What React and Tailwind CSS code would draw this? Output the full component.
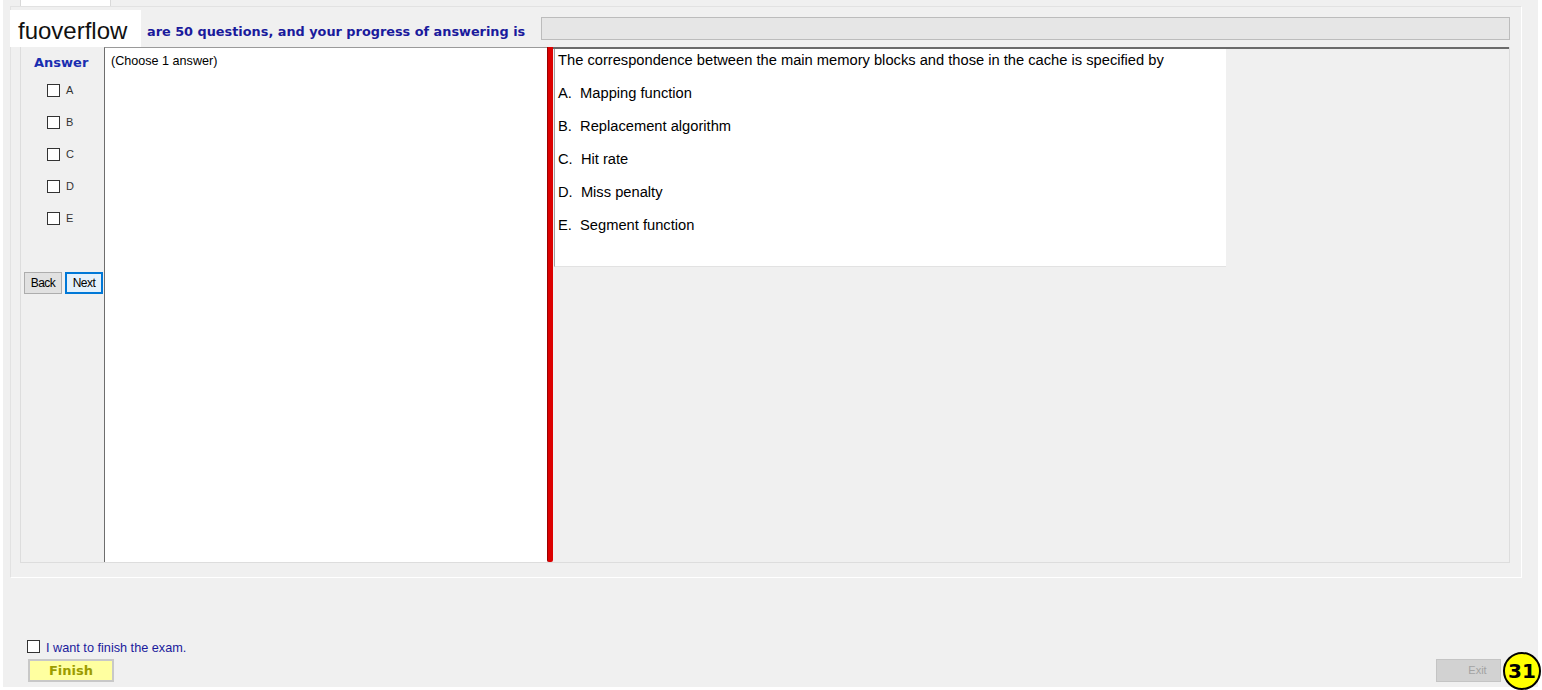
import React from "react";

const options = [
  "Mapping function",
  "Replacement algorithm",
  "Hit rate",
  "Miss penalty",
  "Segment function",
];
const letters = ["A", "B", "C", "D", "E"];

const dv = { fontFamily: '"DejaVu Sans", Verdana, sans-serif' };

function Box({ className = "" }) {
  return (
    <span
      className={
        "block w-[13px] h-[13px] bg-white border border-[#333333] " + className
      }
    />
  );
}

export default function App() {
  return (
    <div
      className="relative w-[1542px] h-[690px] bg-white overflow-hidden"
      style={{ fontFamily: '"Liberation Sans", Arial, sans-serif' }}
    >
      <div className="ml-[3px] w-[1535px] h-[687px] bg-[#f0f0f0] flex flex-col">
        {/* tab strip */}
        <div className="h-[6px] flex">
          <div className="ml-[17px] w-[91px] h-[6px] bg-white border-x border-[#d9d9d9]" />
        </div>

        {/* tab page */}
        <div className="ml-[7px] w-[1512px] h-[572px] border border-[#e2e2e2] border-r-white border-b-white flex flex-col">
          <div className="h-[40px] flex items-start">
            <div
              className="ml-[136px] mt-[17px] leading-[16px] text-[12.85px] font-bold text-[#1a1a9c] whitespace-nowrap"
              style={dv}
            >
              are 50 questions, and your progress of answering is
            </div>
            <div className="ml-auto mr-[11px] mt-[10px] w-[969px] h-[23px] bg-[#e6e6e6] border border-[#bcbcbc]" />
          </div>

          <div className="ml-[9px] w-[1490px] h-[516px] border-x border-b border-[#dddddd] flex">
            {/* answer column */}
            <div className="w-[83px] flex flex-col">
              <div
                className="pt-[8px] pl-[13px] text-[13px] leading-[16px] font-bold text-[#1a2eb0]"
                style={dv}
              >
                Answer
              </div>
              <div className="mt-[3px] flex flex-col">
                {letters.map((l) => (
                  <div key={l} className="h-[32px] flex items-center pl-[26px]">
                    <Box />
                    <span className="ml-[6px] text-[11px] leading-[13px] text-[#333333]">
                      {l}
                    </span>
                  </div>
                ))}
              </div>
              <div className="mt-[38px] pl-[3px] flex gap-[3px]">
                <button className="w-[38px] h-[22px] bg-[#e1e1e1] border border-[#adadad] text-[12px] text-black leading-[20px] tracking-[-0.5px]">
                  Back
                </button>
                <button className="w-[38px] h-[22px] bg-[#e5f1fb] border-2 border-[#0078d7] text-[12px] text-black leading-[18px] tracking-[-0.5px]">
                  Next
                </button>
              </div>
            </div>

            {/* textarea */}
            <div className="w-[443px] bg-white border-l border-t border-l-[#6d6d6d] border-t-[#9a9a9a] pl-[6px] pt-[6px] text-[12.6px] leading-[14px] text-black">
              (Choose 1 answer)
            </div>

            {/* splitter */}
            <div className="w-[6px] bg-[#dc0000] border-l border-[#9a0000] rounded-b-[2px]" />

            {/* question side */}
            <div className="w-[956px] border-t-2 border-[#6b6b6b]">
              <div className="ml-[1px] w-[672px] h-[218px] bg-white border-l border-b border-l-[#a0a0a0] border-b-[#e2e2e2] pl-[3px] pt-[1px] flex flex-col gap-[13px] text-[14.7px] leading-[20px] text-black">
                <div className="whitespace-nowrap">
                  The correspondence between the main memory blocks and those in
                  the cache is specified by
                </div>
                {options.map((o, i) => (
                  <div key={o}>
                    {letters[i]}.{"\u00a0\u00a0"}
                    {o}
                  </div>
                ))}
              </div>
            </div>
          </div>
        </div>

        {/* bottom */}
        <div className="mt-[62px] flex items-center h-[13px]">
          <Box className="ml-[24px]" />
          <span className="ml-[6px] mt-[3px] text-[12.7px] leading-[14px] text-[#1a1a9c]">
            I want to finish the exam.
          </span>
        </div>
        <div className="mt-[6px] flex justify-between">
          <button
            className="ml-[25px] w-[86px] h-[23px] bg-[#ffffa0] border-2 border-[#c8c8c8] text-[13px] leading-[19px] font-bold text-[#9c9c00]"
            style={dv}
          >
            Finish
          </button>
          <button className="mr-[37px] w-[65px] h-[23px] pl-[18px] bg-[#d2d2d2] border border-[#c4c4c4] text-[11px] leading-[21px] text-[#a3a3a3]">
            Exit
          </button>
        </div>
      </div>

      {/* watermark */}
      <div className="absolute left-[10px] top-[10px] w-[131px] h-[37px] bg-white pl-[8px] pt-[7px] text-[24px] leading-[28px] text-[#111111]">
        fuoverflow
      </div>

      {/* badge */}
      <div
        className="absolute left-[1503px] top-[652px] w-[38px] h-[38px] rounded-full bg-[#ffff00] border-2 border-black flex items-center justify-center text-[20px] font-bold text-black leading-none"
        style={dv}
      >
        31
      </div>
    </div>
  );
}
